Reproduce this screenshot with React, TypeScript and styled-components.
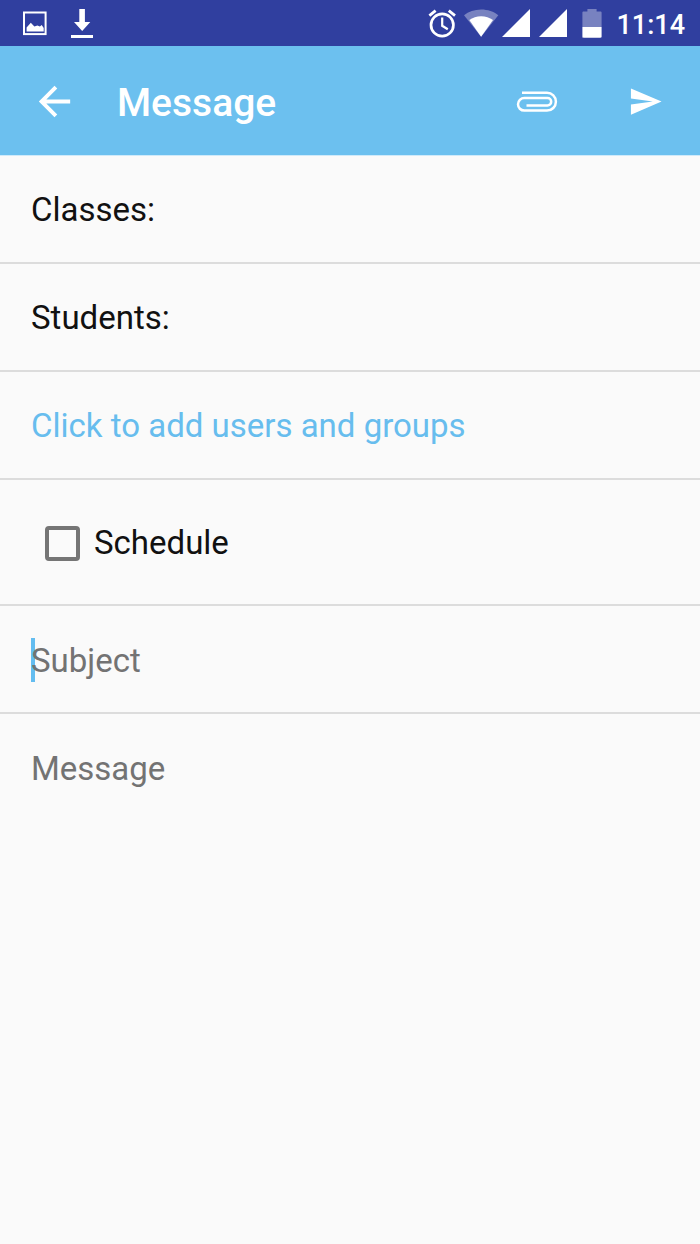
import React, { useState } from 'react';
import styled, { createGlobalStyle } from 'styled-components';

const GlobalStyle = createGlobalStyle`
  *, *::before, *::after { box-sizing: border-box; }
  body {
    margin: 0;
    background: #fafafa;
    font-family: Roboto, "Liberation Sans", sans-serif;
  }
`;

const Screen = styled.div`
  display: flex;
  flex-direction: column;
  min-height: 100vh;
  background: #fafafa;
`;

const StatusBar = styled.div`
  display: flex;
  align-items: center;
  justify-content: space-between;
  height: 46px;
  padding: 0 15px 0 20px;
  background: #303f9f;
  color: #fff;
`;

const StatusGroup = styled.div`
  display: flex;
  align-items: center;

  svg { display: block; }
`;

const Clock = styled.time`
  padding: 4px 0 0 6px;
  font-size: 27px;
  line-height: 42px;
  font-weight: 500;
`;

const AppBar = styled.header`
  display: flex;
  align-items: center;
  height: 110px;
  padding: 2px 1px 0 19px;
  border-bottom: 1px solid #cfeafa;
  background: #6cc0ef;
  color: #fff;
`;

const Title = styled.h1`
  flex: 1;
  margin: 0;
  padding: 2px 0 0 28px;
  font-size: 39px;
  line-height: 48px;
  font-weight: 500;
`;

const IconButton = styled.button<{ $width: number }>`
  display: flex;
  align-items: center;
  justify-content: center;
  width: ${({ $width }) => $width}px;
  height: 96px;
  padding: 0;
  border: 0;
  background: none;
  color: inherit;
  cursor: pointer;
`;

const Form = styled.form`
  display: flex;
  flex: 1;
  flex-direction: column;
`;

const Row = styled.div<{ $tall?: boolean }>`
  display: flex;
  align-items: center;
  min-height: ${({ $tall }) => ($tall ? 126 : 108)}px;
  padding: 2px 31px 0;
  border-bottom: 2px solid #dcdcdc;
  font-size: 33px;
  line-height: 40px;
  color: #111;
`;

const TextInput = styled.input`
  position: relative;
  flex: 1;
  min-width: 0;
  height: 44px;
  padding: 0;
  border: 0;
  outline: 0;
  background: transparent;
  color: #111;
  font: inherit;

  &::placeholder { color: #737373; opacity: 1; }
`;

const CaretField = styled.div<{ $caret: boolean }>`
  position: relative;
  display: flex;
  flex: 1;

  &::before {
    content: "";
    display: ${({ $caret }) => ($caret ? 'block' : 'none')};
    position: absolute;
    top: 0;
    left: 0;
    width: 4px;
    height: 44px;
    background: #64bdf0;
  }
`;

const AddLink = styled.a`
  color: #67bdee;
  text-decoration: none;
`;

const CheckLabel = styled.label`
  display: flex;
  align-items: center;
  gap: 14px;
  padding-left: 14px;
`;

const Checkbox = styled.input`
  appearance: none;
  width: 35px;
  height: 35px;
  margin: 0;
  border: 4px solid #757575;
  border-radius: 4px;

  &:checked { background: #6cc0ef; }
`;

const MessageArea = styled.textarea`
  flex: 1;
  width: 100%;
  padding: 35px 31px;
  border: 0;
  outline: 0;
  resize: none;
  background: transparent;
  color: #111;
  font-family: inherit;
  font-size: 33px;
  line-height: 40px;

  &::placeholder { color: #737373; opacity: 1; }
`;

const PictureIcon = () => (
  <svg width="48" height="46" viewBox="0 0 48 46" aria-hidden="true">
    <rect x="4" y="12.5" width="21.6" height="21.6" fill="none" stroke="#fff" strokeWidth="2" />
    <path d="M6.6 31.6V27.4L10.8 22.8l3.6 3.8 3-1 2.5.8 1.8-1.4 2 3v3.6z" fill="#fff" />
  </svg>
);

const DownloadIcon = () => (
  <svg width="28" height="46" viewBox="0 0 28 46" aria-hidden="true">
    <path d="M11.3 9h5.6v13h5.4L14.2 31 6 22h5.3zM3 35h22v3H3z" fill="#fff" />
  </svg>
);

const AlarmIcon = () => (
  <svg width="36" height="46" viewBox="0 0 36 46" fill="none" stroke="#fff" aria-hidden="true">
    <circle cx="16.2" cy="25" r="11.2" strokeWidth="2.7" />
    <path d="M16.2 17.5v8.3l5.6 3.5" strokeWidth="2.2" />
    <path d="M3.4 15.6l6.2-5M29 15.6l-6.2-5" strokeWidth="2.8" />
  </svg>
);

const WifiIcon = () => (
  <svg width="38" height="46" viewBox="0 0 38 46" fill="#fff" aria-hidden="true">
    <path d="M19.1 36.8L2 15.2C6.5 11.5 12.5 9.4 19.1 9.4s12.8 2.1 17.2 5.8z" opacity=".35" />
    <path d="M19.1 36.8L7.3 20c3.3-2.5 7.4-3.8 11.8-3.8S27.7 17.5 31 20z" />
  </svg>
);

const SignalIcon = () => (
  <svg width="37" height="46" viewBox="0 0 37 46" aria-hidden="true">
    <path d="M2 37L30 9v28z" fill="#fff" />
  </svg>
);

const BatteryIcon = () => (
  <svg width="36" height="46" viewBox="0 0 36 46" fill="#fff" aria-hidden="true">
    <path d="M8.4 27V12.6c0-.8.4-1.2 1.2-1.2h3.8V9h9.2v2.4h3.8c.8 0 1.2.4 1.2 1.2V27z" opacity=".35" />
    <path d="M8.4 27h19.2v9.6c0 .8-.4 1.2-1.2 1.2H9.6c-.8 0-1.2-.4-1.2-1.2z" />
  </svg>
);

const BackIcon = () => (
  <svg width="47" height="47" viewBox="0 0 24 24" fill="currentColor" aria-hidden="true">
    <path d="M20 11H7.83l5.59-5.59L12 4l-8 8 8 8 1.41-1.41L7.83 13H20v-2z" />
  </svg>
);

const ClipIcon = () => (
  <svg width="44" height="24" viewBox="0 0 44 24" fill="none" stroke="currentColor" strokeWidth="2.5" aria-hidden="true">
    <path d="M7 2.8H32a8.9 8.9 0 0 1 0 17.8H9.3a6.3 6.3 0 0 1 0-12.600H32.5a3.700 3.700 0 0 1 0 7.400H11.500" />
  </svg>
);

const SendIcon = () => (
  <svg width="35" height="35" viewBox="0 0 24 24" fill="currentColor" aria-hidden="true">
    <path d="M2.01 21L23 12 2.01 3 2 10l15 2-15 2z" />
  </svg>
);

export default function App() {
  const [subject, setSubject] = useState('');

  return (
    <Screen>
      <GlobalStyle />
      <StatusBar>
        <StatusGroup>
          <PictureIcon />
          <DownloadIcon />
        </StatusGroup>
        <StatusGroup>
          <AlarmIcon />
          <WifiIcon />
          <SignalIcon />
          <SignalIcon />
          <BatteryIcon />
          <Clock>11:14</Clock>
        </StatusGroup>
      </StatusBar>
      <AppBar>
        <IconButton type="button" $width={70} aria-label="Back"><BackIcon /></IconButton>
        <Title>Message</Title>
        <IconButton type="button" $width={108} aria-label="Attach file"><ClipIcon /></IconButton>
        <IconButton type="submit" form="compose" $width={108} aria-label="Send"><SendIcon /></IconButton>
      </AppBar>
      <Form id="compose" onSubmit={(e) => e.preventDefault()}>
        <Row>
          <label htmlFor="classes">Classes:</label>
          <TextInput id="classes" />
        </Row>
        <Row>
          <label htmlFor="students">Students:</label>
          <TextInput id="students" />
        </Row>
        <Row>
          <AddLink href="#users">Click to add users and groups</AddLink>
        </Row>
        <Row $tall>
          <CheckLabel>
            <Checkbox type="checkbox" />
            Schedule
          </CheckLabel>
        </Row>
        <Row>
          <CaretField $caret={subject === ''}>
            <TextInput
              aria-label="Subject"
              placeholder="Subject"
              value={subject}
              onChange={(e) => setSubject(e.target.value)}
            />
          </CaretField>
        </Row>
        <MessageArea aria-label="Message" placeholder="Message" />
      </Form>
    </Screen>
  );
}
